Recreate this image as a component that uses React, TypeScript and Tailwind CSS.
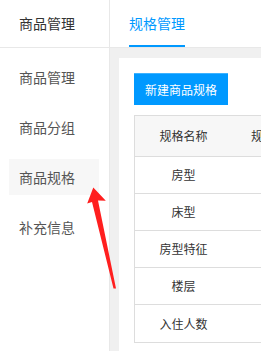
const menu = ["商品管理", "商品分组", "商品规格", "补充信息"];
const specs = ["房型", "床型", "房型特征", "楼层", "入住人数"];

export default function App() {
  const active = "商品规格";

  return (
    <div className="relative flex h-[351px] w-[261px] overflow-hidden bg-white font-['Noto_Sans_CJK_SC',sans-serif]">
      {/* left edge strip */}
      <div className="flex w-[2px] flex-col">
        <div className="h-[160px] bg-[#454545]" />
        <div className="h-[36px] bg-white" />
        <div className="flex-1 bg-[#454545]" />
      </div>

      <div className="flex flex-1 flex-col">
        {/* Header */}
        <div className="flex h-[48px] shrink-0 border-b border-[#e8e8e8]">
          <div className="flex w-[110px] items-center border-r border-[#e8e8e8] pl-[19px] text-[14px] text-[#333]">
            商品管理
          </div>
          <div className="flex pl-[19px]">
            <div className="flex h-full items-center border-b-2 border-[#0099ff] pt-[2px] text-[14px] text-[#0099ff]">
              规格管理
            </div>
          </div>
        </div>

        <div className="flex flex-1">
          {/* Sidebar */}
          <div className="flex w-[110px] shrink-0 flex-col gap-[14px] border-r border-[#e8e8e8] pl-[9px] pr-[10px] pt-[11px]">
            {menu.map((m) => (
              <div
                key={m}
                className={
                  "flex h-[36px] items-center pl-[10px] text-[14px] text-[#555] " +
                  (m === active ? "bg-[#f7f7f7]" : "")
                }
              >
                {m}
              </div>
            ))}
          </div>

          {/* Content */}
          <div className="flex-1 bg-[#f0f0f0] pl-[9px] pt-[10px]">
            <div className="h-full w-[200px] bg-white pl-[15px] pt-[15px]">
              <button className="h-[32px] w-[94px] border-t border-[#3db2ff] bg-[#0099ff] text-[12px] text-white">
                新建商品规格
              </button>
              <div className="mt-[10px] w-[180px] border-y border-l border-[#dddddd] text-[12px] text-[#333]">
                <div className="flex h-[41px] items-center border-b border-[#dddddd] bg-[#f7f7f7]">
                  <div className="w-[97px] text-center">规格名称</div>
                  <div className="w-[74px] text-center">规格值</div>
                </div>
                {specs.map((s, i) => (
                  <div
                    key={s}
                    className={
                      "flex h-[37px] items-center " +
                      (i < specs.length - 1 ? "border-b border-[#dddddd]" : "")
                    }
                  >
                    <div className="w-[97px] text-center">{s}</div>
                    <div className="w-[74px]" />
                  </div>
                ))}
              </div>
            </div>
          </div>
        </div>
      </div>

      {/* red annotation arrow */}
      <svg className="absolute left-0 top-0" width="261" height="351" viewBox="0 0 261 351">
        <polygon
          points="93.3,187.5 105.8,200.8 98,200.5 116,288.5 113.5,288.5 92,202 87.2,203.5"
          fill="#ff1f1f"
        />
      </svg>
    </div>
  );
}
